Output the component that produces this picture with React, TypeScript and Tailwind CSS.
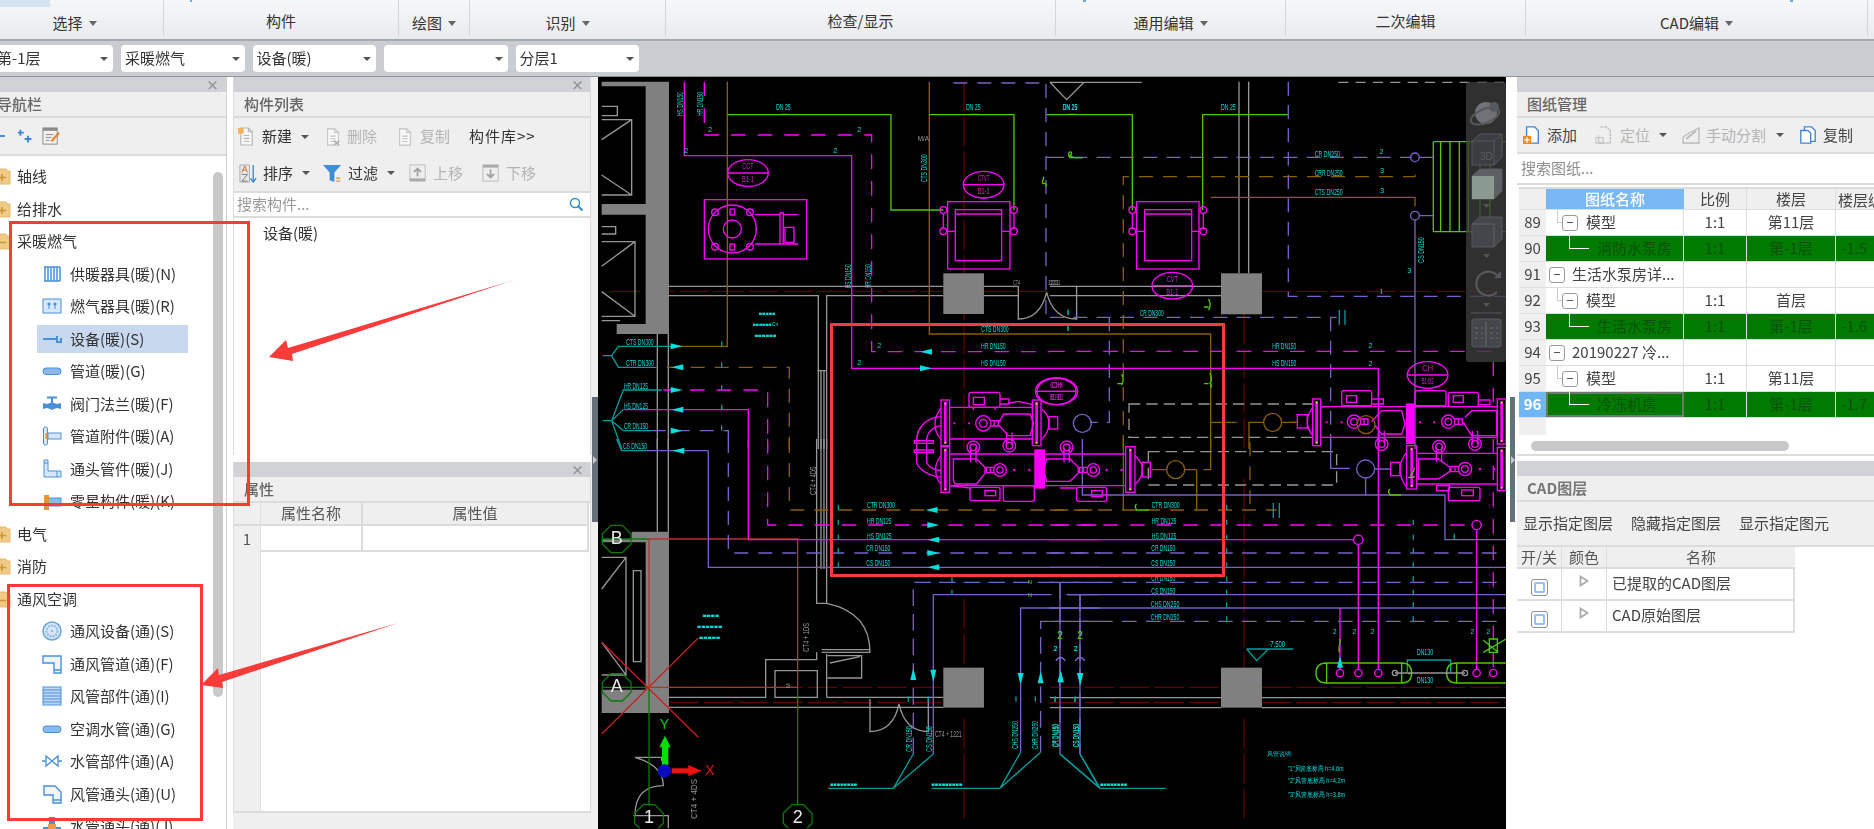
import type { ReactNode } from 'react';

const MG = '#ff00ff';
const GR = '#4ec800';
const PU = '#7a5fc8';
const BR = '#8a5e00';
const CY = '#00dede';
const TE = '#009c9c';
const GY = '#808080';
const LG = '#969696';
const DR = '#5c0000';
const DG = '#0a7a0a';
const BL = '#4a90d9';

// ---------- CAD drawing helpers ----------
const Q = ({ x, y, children }: { x: number; y: number; children: ReactNode }) => (
    <g transform={`translate(${x} ${y}) scale(0.3333)`} fill="none" strokeWidth={4}>{children}</g>
);
const P = ({ c, d, dash }: { c: string; d: string; dash?: string }) => <path d={d} stroke={c} strokeDasharray={dash} />;
const T = ({ x, y, t, r, c = CY, s = 25, w }: { x: number; y: number; t: string; r?: boolean; c?: string; s?: number; w?: number }) => (
    <text x={x} y={y} fill={c} stroke="none" fontSize={s} textAnchor="middle" dominantBaseline="middle"
        textLength={w} lengthAdjust={w ? 'spacingAndGlyphs' : undefined}
        transform={r ? `rotate(-90 ${x} ${y})` : undefined}>{t}</text>
);
const Arrow = ({ x, y, d }: { x: number; y: number; d: 'l' | 'r' | 'u' | 'd' }) => {
    const pts = {
        l: `${x - 18},${y} ${x + 18},${y - 9} ${x + 18},${y + 9}`,
        r: `${x + 18},${y} ${x - 18},${y - 9} ${x - 18},${y + 9}`,
        u: `${x},${y - 18} ${x - 9},${y + 18} ${x + 9},${y + 18}`,
        d: `${x},${y + 18} ${x - 9},${y - 18} ${x + 9},${y - 18}`,
    }[d];
    return <polygon points={pts} fill={CY} stroke="none" />;
};
const Ticks = ({ x, ys }: { x: number; ys: number }) => (
    <path d={`M${x} ${ys - 8}V${ys + 8}`} stroke={TE} />
);
const Bubble = ({ x, y, a, b }: { x: number; y: number; a: string; b: string }) => (
    <g stroke={MG}>
        <ellipse cx={x} cy={y} rx={61} ry={40} />
        <path d={`M${x - 60} ${y}H${x + 60}`} />
        <T x={x} y={y - 18} t={a} w={34} c="#d020d0" />
        <T x={x} y={y + 20} t={b} w={36} c="#d020d0" />
    </g>
);
const Circles = ({ c, r, pts }: { c: string; r: number; pts: number[][] }) => (
    <g stroke={c}>{pts.map(([x, y], i) => <circle key={i} cx={x} cy={y} r={r} />)}</g>
);
const Grid = ({ x, y, t }: { x: number; y: number; t: string }) => (
    <g>
        <polygon stroke={DG} points={`${x - 17},${y - 41} ${x + 17},${y - 41} ${x + 43},${y - 15} ${x + 43},${y + 15} ${x + 17},${y + 41} ${x - 17},${y + 41} ${x - 43},${y + 15} ${x - 43},${y - 15}`} />
        <T x={x} y={y} t={t} c="#e8e8e8" s={54} />
    </g>
);

// chiller parts, in the 3x crop units
const Plate = ({ x, a, b, w = 26 }: { x: number; a: number; b: number; w?: number }) => (
    <g>
        <rect x={x} y={a} width={w} height={b - a} />
        <rect x={x + w / 2 - 4} y={a + 6} width={8} height={b - a - 12} fill={MG} stroke="none" />
        <circle cx={x + w / 2} cy={a + 11} r={3} fill="#ffc848" stroke="none" />
        <circle cx={x + w / 2} cy={b - 9} r={3} fill="#ffc848" stroke="none" />
    </g>
);
const Key = ({ x, y, r = 22, flip }: { x: number; y: number; r?: number; flip?: boolean }) => {
    const s = flip ? -1 : 1;
    return (
        <g>
            <circle cx={x} cy={y} r={r} />
            <circle cx={x} cy={y} r={r / 2} />
            <path d={`M${x + s * r} ${y - 8}H${x + s * (r + 22)}V${y + 8}H${x + s * r}M${x + s * (r + 10)} ${y - 8}V${y + 8}`} />
        </g>
    );
};
const Drop = ({ x, y, up }: { x: number; y: number; up?: boolean }) => (
    <g>
        <circle cx={x} cy={y} r={19} />
        <circle cx={x} cy={y} r={10} />
        <path d={`M${x - 8} ${y}V${y + (up ? 45 : -40)}M${x + 8} ${y}V${y + (up ? 45 : -40)}`} />
    </g>
);
const Dots = ({ pts }: { pts: number[][] }) => (
    <g fill={MG} stroke="none">{pts.map(([x, y], i) => <circle key={i} cx={x} cy={y} r={3.5} />)}</g>
);

const ChillerA = () => (
    <Q x={905} y={385}>
        <g stroke={MG}>
            <Plate x={108} a={48} b={185} />
            <Plate x={382} a={48} b={185} />
            <Plate x={108} a={188} b={325} />
            <Plate x={662} a={188} b={325} w={28} />
            <rect x={390} y={198} width={28} height={114} fill={MG} />
            <path d="M135 70H382M135 165H382M135 210H662M135 305H662" />
            <path d="M108 72Q90 95 90 120Q90 148 108 165M410 75Q431 92 432 116Q431 148 410 165M108 215Q92 235 92 255Q92 285 108 300M690 215Q712 235 712 255Q712 285 690 300" />
            <path d="M108 98C60 100 35 135 35 170V232C35 252 70 276 108 280M108 125C78 130 65 150 65 170V232C65 245 85 258 108 260" />
            <path d="M28 170H85V178H28ZM28 198H85V206H28Z" />
            <rect x={432} y={98} width={26} height={37} />
            <rect x={712} y={235} width={24} height={44} />
            <rect x={192} y={25} width={93} height={45} rx={6} />
            <rect x={205} y={40} width={33} height={22} />
            <path d="M285 45H312V60H285M312 58L340 52L385 62M205 70V78M270 70V78" />
            <Key x={235} y={118} r={23} />
            <path d="M280 118L296 90H375L386 118L375 155H310L280 122" />
            <Drop x={313} y={185} />
            <path d="M145 225H215L240 250V268L215 300H150L145 290Z" />
            <path d="M425 225H495L520 250V268L495 292H425L416 258Z" />
            <path d="M240 258" />
            <Key x={285} y={258} r={19} flip />
            <Key x={565} y={258} r={19} flip />
            <Drop x={205} y={190} up />
            <Drop x={485} y={190} up />
            <rect x={195} y={310} width={90} height={40} rx={6} />
            <rect x={240} y={320} width={32} height={15} />
            <rect x={295} y={305} width={93} height={47} rx={6} />
            <rect x={515} y={310} width={90} height={42} rx={6} />
            <rect x={560} y={320} width={32} height={18} />
            <path d="M135 305L195 312M465 312H515" />
        </g>
        <Dots pts={[[148, 118], [192, 118], [328, 258], [373, 258], [605, 258], [650, 258]]} />
    </Q>
);

const ChillerB = () => (
    <Q x={1290} y={385}>
        <g stroke={MG}>
            <Plate x={68} a={45} b={185} w={24} />
            <rect x={350} y={60} width={22} height={118} fill={MG} />
            <Plate x={622} a={45} b={180} w={26} />
            <Plate x={350} a={185} b={315} w={30} />
            <Plate x={622} a={190} b={320} w={26} />
            <path d="M92 68H622M92 160H622M380 208H622M380 300H622" />
            <path d="M68 70Q52 90 52 112Q52 135 68 155M350 205Q330 230 330 255Q330 285 350 310" />
            <rect x={22} y={92} width={30} height={40} />
            <rect x={302} y={235} width={28} height={40} />
            <rect x={155} y={20} width={90} height={45} rx={6} />
            <rect x={170} y={35} width={30} height={20} />
            <path d="M245 45H280V60H245" />
            <rect x={375} y={20} width={93} height={45} rx={6} />
            <rect x={475} y={25} width={90} height={43} rx={6} />
            <rect x={490} y={35} width={30} height={20} />
            <path d="M565 48H600V62H565" />
            <Key x={192} y={113} r={20} />
            <Key x={475} y={113} r={20} />
            <path d="M245 113L275 80H335L345 120L335 150H275L255 125" />
            <path d="M525 100L545 80H620V155H545L520 115" />
            <Drop x={275} y={180} />
            <Drop x={555} y={180} />
            <Drop x={447} y={188} up />
            <path d="M385 225H445L480 250V262L445 285H385Z" />
            <Key x={525} y={255} r={20} flip />
            <rect x={475} y={310} width={95} height={40} rx={6} />
            <rect x={515} y={318} width={35} height={17} />
            <rect x={440} y={305} width={38} height={15} />
        </g>
        <Dots pts={[[110, 115], [155, 115], [390, 115], [433, 115], [570, 255], [612, 255]]} />
        <P c={BR} d="M0 115H22" />
        <Circles c={BR} r={27} pts={[[228, 122]]} />
        <P c={GR} d="M372 250c4 12-4 14-8 22s6 12 10 4M354 280h14" />
    </Q>
);

const CadDrawing = () => (
    <svg width={908} height={751} viewBox="598 78 908 751" className="block font-['Liberation_Sans',sans-serif]">
        {/* top left */}
        <Q x={600} y={70}>
            <P c={DR} d="M30 667H1030M1092 38V1140M1152 667H1350" dash="90 14" />
            <path fill={GY} d="M5 38H207V795H50V765H137V437H5V405H137V52H5Z" />
            <rect x={1030} y={613} width={122} height={122} fill={GY} />
            <P c={LG} d="M5 152H95V378H5M5 212L95 152M5 318L95 378M5 112H52V140H5M5 518H105V742H5M5 592L105 518M5 668L105 742M5 473H47V495H5M5 755H60" />
            <P c={LG} d="M172 795V1140M205 795V1140M207 652H1030M207 680H655V1140M680 1140V680H1030M663 905V1140M672 905V1140M652 905H680" />
            <P c={LG} d="M1152 652H1255V750Q1320 750 1340 670Q1360 750 1430 750V652H1350M1152 680H1255M1430 680H1350M1350 40L1400 92L1452 40" />
            <P c={BR} d="M382 38V832H215M988 38V795H1350" />
            <P c={BR} d="M200 895H568V1140" dash="42 30" />
            <P c={GR} d="M382 137H873V423H1030M988 137H1242V423M1340 137H1350" />
            <P c={MG} d="M253 38V260H755V898H1350M70 1022H445V1140" />
            <P c={MG} d="M313 38V198H815V848H1350M190 963H503V1140" dash="44 36" />
            <P c={PU} d="M1338 45V745H1350M1060 42H1340M1340 265H1350M155 1085H385V1140" dash="42 30" />
            <P c={TE} d="M8 860H35L55 832H215M35 860L55 895H170M8 1055H35L70 963H185M35 1055L70 1022M35 1055L70 1085H155M35 1055L65 1140" />
            <g stroke={MG}>
                <rect x={313} y={392} width={307} height={178} />
                <circle cx={397} cy={480} r={72} />
                <circle cx={397} cy={480} r={27} />
                <path d="M465 437H540M465 525H540M540 432H550V525H540ZM550 437H595M550 525H595M555 475H582V520H555Z" />
                <rect x={390} y={420} width={14} height={18} />
                <rect x={390} y={525} width={14} height={18} />
                <rect x={1043} y={398} width={187} height={202} />
                <rect x={1066} y={422} width={139} height={153} />
                <path d="M1066 435H1205M1030 432V478M1242 432V478M1040 487H1066M1205 487H1232" />
            </g>
            <Circles c={MG} r={10} pts={[[345, 430], [450, 430], [345, 533], [450, 533], [1030, 423], [1030, 487], [1242, 423], [1242, 487]]} />
            <Bubble x={444} y={312} a="CCT" b="B1-1" />
            <Bubble x={1151} y={347} a="CTVT" b="B1-1" />
            <Bubble x={1372} y={967} a="CH" b="B1-B1" />
            <T x={243} y={105} t="HS DN150" r w={72} />
            <T x={303} y={105} t="HR DN150" r w={72} />
            <T x={745} y={622} t="HS DN150" r w={72} />
            <T x={805} y={622} t="HR DN150" r w={72} />
            <T x={975} y={298} t="CTS DN300" r w={84} />
            <T x={550} y={115} t="DN 25" w={44} />
            <T x={1120} y={115} t="DN 25" w={44} />
            <T x={1410} y={115} t="DN 25" w={44} />
            <T x={502} y={735} t="■■■■■" s={14} w={50} />
            <T x={497} y={767} t="■■■■■■Cn" s={14} w={76} />
            <T x={497} y={800} t="■■■■■■" s={14} w={66} />
            <T x={120} y={822} t="CTS DN300" w={82} />
            <T x={120} y={884} t="CTR DN300" w={84} />
            <T x={108} y={952} t="HR DN125" w={72} />
            <T x={108} y={1012} t="HS DN125" w={72} />
            <T x={108} y={1072} t="CR DN150" w={72} />
            <T x={1185} y={783} t="CTS DN300" w={82} />
            <T x={1180} y={833} t="HR DN150" w={74} />
            <T x={1180} y={885} t="HS DN150" w={74} />
            <T x={838} y={831} t="2" s={22} />
            <T x={778} y={882} t="2" s={22} />
            <T x={330} y={184} t="2" s={22} />
            <T x={778} y={184} t="2" s={22} />
            <T x={258} y={246} t="2" s={22} />
            <T x={706} y={246} t="2" s={22} />
            <T x={970} y={212} t="M/A" c={LG} s={20} w={34} />
            <T x={1360} y={642} t="1221" c={LG} s={22} w={32} />
            <T x={1250} y={642} t="CT4" c={LG} s={22} w={22} />
            <Ticks x={365} ys={825} />
            <Ticks x={365} ys={888} />
            <Ticks x={365} ys={957} />
            <Ticks x={365} ys={1015} />
            <Ticks x={365} ys={1077} />
            <Ticks x={1404} ys={730} />
            <Ticks x={1404} ys={778} />
            <Arrow x={230} y={832} d="r" />
            <Arrow x={232} y={895} d="l" />
            <Arrow x={230} y={963} d="r" />
            <Arrow x={232} y={1022} d="l" />
            <Arrow x={230} y={1085} d="r" />
            <Arrow x={978} y={848} d="l" />
            <Arrow x={978} y={898} d="r" />
            <P c={GR} d="M545 136h22M1110 136h24M1404 136h24M1405 262c8-6 12 4 18 4h22M1330 345c-8-8 4-14 0-22M1330 345c6-4 10 0 8 8" />
        </Q>

        {/* top right */}
        <Q x={1050} y={70}>
            <P c={DR} d="M636 667H1370M582 735V1140" dash="90 14" />
            <P c={LG} d="M0 40H275M80 652H513M80 680H513M567 38V613M596 38V613" />
            <P c={LG} d="M865 40H1370" dash="30 22" />
            <rect x={513} y={613} width={123} height={123} fill={GY} />
            <P c={GR} d="M0 137H247V423M458 423V137H715M1150 218H1370M1150 488H1370M1150 218V488M1172 218V488M1200 218V488M1228 218V488M1255 218V488M1290 218V488M1320 218V488" />
            <P c={BR} d="M0 795H482V1140M482 385H1095V412M482 1060H560M640 1060H597V1140M697 1060H745" />
            <P c={BR} d="M220 1140V323H1095V310" dash="42 30" />
            <P c={PU} d="M0 265H1085" dash="42 28" />
            <P c={PU} d="M1108 265H1150M1108 440H1150M1095 453V1140" />
            <P c={PU} d="M715 38V682H1370M0 745H860M178 745V1060H120M842 745V1140" dash="42 28" />
            <P c={MG} d="M0 898H985V1140" />
            <P c={MG} d="M0 847H1330V1000" dash="44 36" />
            <P c={TE} d="M868 723V768M885 723V768" />
            <P c={LG} d="M237 1005H800V1105H237Z" dash="34 18" />
            <g stroke={MG}>
                <rect x={260} y={398} width={187} height={202} />
                <rect x={284} y={422} width={141} height={153} />
                <path d="M284 435H425M247 432V478M460 432V478M257 487H284M425 487H450" />
            </g>
            <Circles c={MG} r={10} pts={[[247, 423], [247, 487], [460, 423], [460, 487]]} />
            <Bubble x={367} y={650} a="CVT" b="B1-1" />
            <Bubble x={1133} y={918} a="CH" b="B1-B2" />
            <Bubble x={17} y={967} a="CH" b="B1-B1" />
            <Circles c={PU} r={13} pts={[[1095, 265], [1095, 440]]} />
            <Circles c={PU} r={27} pts={[[97, 1063]]} />
            <Circles c={BR} r={27} pts={[[668, 1060]]} />
            <T x={60} y={115} t="DN 25" w={44} />
            <T x={535} y={115} t="DN 25" w={44} />
            <T x={832} y={256} t="CR DN250" w={76} />
            <T x={836} y={313} t="CRR DN250" w={84} />
            <T x={836} y={372} t="CTS DN250" w={84} />
            <T x={305} y={735} t="CR DN300" w={72} />
            <T x={703} y={833} t="HR DN150" w={72} />
            <T x={703} y={885} t="HS DN150" w={72} />
            <T x={1115} y={543} t="CS DN150" r w={76} />
            <T x={995} y={249} t="2" s={22} />
            <T x={996} y={306} t="3" s={22} />
            <T x={996} y={366} t="3" s={22} />
            <T x={1078} y={605} t="3" s={22} />
            <T x={962} y={830} t="2" s={22} />
            <T x={962} y={885} t="2" s={22} />
            <T x={15} y={642} t="1221" c={LG} s={22} w={32} />
            <Ticks x={55} ys={730} />
            <Ticks x={55} ys={778} />
            <Ticks x={994} ys={667} />
            <P c={GR} d="M60 248c-10 8 0 16 0 18h38M60 248c8 2 4 10 0 10M476 690c4 14 8 14 0 34M480 940c4 14 8 14 0 14M215 915c4 14 8 14 0 34M480 912c4 14 8 14 0 34M462 714h14M202 944h14M462 944h14" />
        </Q>

        {/* bottom left */}
        <Q x={600} y={440}>
            <P c={DR} d="M207 745H1030M207 790H1030M1092 480V686M1092 840V1140" dash="90 14" />
            <path fill={GY} d="M95 278H207V822H5V752H137V310H5V300H95Z" />
            <rect x={1030} y={686} width={122} height={120} fill={GY} />
            <P c={LG} d="M172 0V278M205 0V278M5 355H78V708H5M5 450L78 355M5 610L78 708M100 395H123V668H100ZM650 0V493H680V0M663 0V390M672 0V390" />
            <P c={LG} d="M680 493Q810 520 810 640M665 632H812M665 640H812M650 640V662H497V775H207M525 695H652V775H525ZM680 645V775M683 650H785V717H683M690 672L780 653M680 775H1030M207 805H1030M810 780V878Q880 878 897 795Q915 878 985 878V775" />
            <P c={LG} d="M105 955H185V965M105 955Q190 980 190 1040Q105 1040 105 1130M100 1130H205V1167" />
            <P c={DG} d="M10 300H147M10 745H147V1100M593 745V1095" />
            <P c="#b03434" d="M147 300H593V745H147Z" />
            <P c="#c82020" d="M5 610L295 895M295 597L5 885" />
            <Grid x={50} y={300} t="B" />
            <Grid x={50} y={745} t="A" />
            <Grid x={147} y={1138} t="1" />
            <Grid x={593} y={1138} t="2" />
            <P c={MG} d="M445 0V302H1500" />
            <P c={MG} d="M503 0V258H1500" dash="44 36" />
            <P c={BR} d="M568 0V213H1500" dash="42 30" />
            <P c={PU} d="M385 0V342H1500" dash="42 30" />
            <P c={PU} d="M325 35V385H1500M140 35H325M1000 945V467H1355M1400 467H1500M1262 940V507H1500" />
            <P c={PU} d="M940 945V430H1500M1322 940V547H1500M1380 430V940M1440 467V945" dash="50 24" />
            <P c={TE} d="M50 0L65 35H140M940 945L880 1048M1000 945L880 1048M880 1048H685M1262 940L1200 1048M1322 940L1200 1048M1200 1048H995M1380 945L1500 1048M1440 945L1500 1048" />
            <T x={105} y={22} t="CS DN150" w={72} />
            <T x={843} y={200} t="CTR DN300" w={84} />
            <T x={838} y={248} t="HR DN125" w={74} />
            <T x={838} y={292} t="HS DN125" w={74} />
            <T x={835} y={330} t="CR DN150" w={72} />
            <T x={835} y={375} t="CS DN150" w={72} />
            <T x={333} y={530} t="■■■■" s={14} w={50} />
            <T x={330} y={563} t="■■■■■■" s={14} w={76} />
            <T x={330} y={597} t="■■■■■" s={14} w={64} />
            <T x={640} y={125} t="CT4 + 4DS" c={LG} r w={86} />
            <T x={620} y={595} t="CT4 + 1DS" c={LG} r w={86} />
            <T x={565} y={740} t="M" c={LG} s={18} r />
            <T x={285} y={1080} t="CT4 + 4DS" c={LG} r w={120} />
            <T x={1045} y={886} t="CT4 + 1221" c={LG} w={80} />
            <T x={928} y={900} t="CR DN150" r w={76} />
            <T x={988} y={900} t="CS DN150" r w={76} />
            <T x={1248} y={888} t="CHS DN250" r w={84} />
            <T x={1308} y={888} t="CHR DN250" r w={84} />
            <T x={1370} y={890} t="CR DN150" r w={70} />
            <T x={1430} y={890} t="CS DN150" r w={70} />
            <T x={730} y={1038} t="■■■■■■■■" s={15} w={82} />
            <T x={1040} y={1038} t="■■■■■■■■■" s={15} w={94} />
            <T x={1380} y={593} t="2" c={GR} s={30} />
            <T x={1440} y={593} t="2" c={GR} s={30} />
            <T x={1290} y={430} t="N" c={GR} s={18} />
            <T x={1290} y={468} t="N" c={GR} s={18} />
            <T x={1366} y={632} t="2" s={20} />
            <T x={1428} y={632} t="2" s={20} />
            <P c={PU} d="M1368 665Q1382 645 1396 665M1426 665Q1440 645 1454 665" />
            <Ticks x={715} ys={205} />
            <Ticks x={715} ys={250} />
            <Ticks x={715} ys={295} />
            <Ticks x={715} ys={335} />
            <Ticks x={715} ys={378} />
            <Ticks x={1056} ys={422} />
            <Ticks x={1056} ys={460} />
            <Ticks x={925} ys={780} />
            <Ticks x={985} ys={780} />
            <Ticks x={1248} ys={780} />
            <Ticks x={1306} ys={780} />
            <Ticks x={1366} ys={780} />
            <Ticks x={1426} ys={780} />
            <Arrow x={235} y={35} d="l" />
            <Arrow x={995} y={213} d="l" />
            <Arrow x={1000} y={258} d="r" />
            <Arrow x={1000} y={302} d="l" />
            <Arrow x={1000} y={342} d="r" />
            <Arrow x={1000} y={385} d="l" />
            <Arrow x={940} y={705} d="u" />
            <Arrow x={1000} y={710} d="d" />
            <Arrow x={1262} y={720} d="d" />
            <Arrow x={1322} y={715} d="u" />
            <Arrow x={1382} y={712} d="u" />
            <Arrow x={1440} y={720} d="d" />
            {/* axis */}
            <polygon fill="#00e000" stroke="none" points="195,890 178,925 186,925 186,978 205,978 205,925 212,925" />
            <polygon fill="#f01010" stroke="none" points="215,988 265,988 265,978 305,995 265,1012 265,1003 215,1003" />
            <circle cx={193} cy={996} r={20} fill="#0a0ac0" stroke="none" />
            <T x={193} y={858} t="Y" c="#00d000" s={44} />
            <T x={330} y={996} t="X" c="#e01010" s={44} />
        </Q>

        {/* bottom right */}
        <Q x={1050} y={440}>
            <P c={DR} d="M0 745H513M636 745H1370M0 790H513M636 790H1370M582 120V686M582 840V1140" dash="90 14" />
            <rect x={513} y={686} width={123} height={120} fill={GY} />
            <P c={LG} d="M0 776H513M636 776H1370M0 806H513M636 806H1370" />
            <P c={BR} d="M0 213H680M600 10V213" dash="42 30" />
            <P c={BR} d="M220 0V213M440 92V213M305 92H350M404 92H440M482 0V92H460" />
            <P c={LG} d="M295 38H860V138H295Z" dash="34 18" />
            <P c={MG} d="M0 302H911M939 302H940M925 316V690M985 0V690M870 507V690M1280 272V690" />
            <P c={MG} d="M0 258H1266M1330 0V690" dash="44 36" />
            <P c={PU} d="M0 342H1370M0 430H1370M0 547H1370" dash="44 28" />
            <P c={PU} d="M97 0V168H1185V302H1370M0 385H1370M50 467H1370M0 507H1370M842 0V88H900M947 117V168M975 90H1025M30 430V945M90 467V945" />
            <P c={TE} d="M30 945L150 1048M90 945L150 1048M150 1048H348M590 630H730M590 630L620 665L655 630M670 192V237M688 192V237M1072 700V663H1202V700" />
            <P c={GR} d="M830 672H1055Q1085 672 1085 702Q1085 732 1055 732H830Q798 732 798 702Q798 672 830 672ZM830 672V732M1055 672V732M1368 672H1220Q1190 672 1190 702Q1190 732 1220 732H1368M1220 672V732M1318 600H1342V640H1318ZM1300 604L1345 640M1300 640L1368 600" />
            <P c={GR} d="M260 195c-10 6 0 16 0 18h36M1020 150c-10 6 0 16 0 18h34M1075 705q8-4 12 0M870 600c4 10 -6 18 -2 40" />
            <P c={LG} d="M1035 702H1245" />
            <Circles c={LG} r={8} pts={[[1035, 702], [1245, 702]]} />
            <Circles c={MG} r={11} pts={[[870, 702], [925, 702], [985, 702], [1280, 702], [1330, 702]]} />
            <Circles c={MG} r={14} pts={[[925, 302], [1280, 258]]} />
            <Circles c={PU} r={27} pts={[[947, 90]]} />
            <Circles c={BR} r={27} pts={[[377, 92]]} />
            <T x={347} y={200} t="CTR DN300" w={84} />
            <T x={342} y={248} t="HR DN125" w={74} />
            <T x={342} y={292} t="HS DN125" w={74} />
            <T x={340} y={330} t="CR DN150" w={72} />
            <T x={340} y={375} t="CS DN150" w={72} />
            <T x={340} y={420} t="CR DN150" w={72} />
            <T x={340} y={458} t="CS DN150" w={72} />
            <T x={345} y={497} t="CHS DN250" w={86} />
            <T x={345} y={537} t="CHR DN250" w={86} />
            <T x={18} y={890} t="CR DN150" r w={70} />
            <T x={80} y={890} t="CS DN150" r w={70} />
            <T x={190} y={1038} t="■■■■■■■■" s={15} w={82} />
            <T x={680} y={618} t="-7.500" w={50} />
            <T x={1125} y={642} t="DN130" w={50} />
            <T x={1125} y={725} t="DN130" w={50} />
            <T x={690} y={947} t="风管说明:" s={18} w={76} />
            <T x={797} y={990} t='"1"风管底标高 h=4.6m' s={20} w={168} />
            <T x={800} y={1028} t='"2"风管底标高 h=4.2m' s={20} w={172} />
            <T x={800} y={1070} t='"3"风管底标高 h=3.8m' s={20} w={172} />
            <T x={30} y={592} t="2" c={GR} s={30} />
            <T x={90} y={592} t="2" c={GR} s={30} />
            <T x={17} y={632} t="2" s={20} />
            <T x={77} y={632} t="2" s={20} />
            <T x={855} y={580} t="2" s={20} />
            <T x={913} y={580} t="2" s={20} />
            <T x={968} y={580} t="2" s={20} />
            <T x={1267} y={580} t="2" s={20} />
            <T x={1315} y={580} t="2" s={20} />
            <P c={PU} d="M18 665Q31 645 45 665M76 665Q90 645 104 665" />
            {[205, 250, 295, 335, 378, 420, 460, 498, 540].map((y) => <Ticks key={y} x={530} ys={y} />)}
            {[250, 295, 335, 378, 420, 460, 498, 540].map((y) => <Ticks key={y} x={1090} ys={y} />)}
            <Ticks x={1213} ys={292} />
            <Ticks x={15} ys={782} />
            <Ticks x={75} ys={782} />
            <Arrow x={32} y={712} d="u" />
            <Arrow x={91} y={720} d="d" />
            <Arrow x={870} y={668} d="u" />
        </Q>
        <ChillerA />
        <ChillerB />
    </svg>
);

// ---------- UI icons ----------
const Ic = ({ s = 20, children, className }: { s?: number; children: ReactNode; className?: string }) => (
    <svg width={s} height={s} viewBox="0 0 20 20" fill="none" className={`shrink-0 ${className ?? ''}`}>{children}</svg>
);
const Caret = () => <span className="ml-[6px] block h-0 w-0 border-x-[4px] border-t-[5px] border-x-transparent border-t-[#666]" />;
const TinyCaret = ({ className }: { className: string }) => (
    <span className={`h-0 w-0 shrink-0 border-x-[4px] border-t-[4px] border-x-transparent border-t-[#555] ${className}`} />
);

const Folder = ({ open }: { open?: boolean }) => (
    <svg width={18} height={18} viewBox="0 0 18 18" className="-ml-[7px] shrink-0">
        <path d="M1 4h5l1-2h6l1 2h3v13H1z" fill="#efcb86" stroke="#e3b96c" />
        <path d={open ? 'M5 10.5h8' : 'M5 10.5h8M9 7v7'} stroke="#c9963c" strokeWidth={1.6} />
    </svg>
);

const treeIcons: Record<string, ReactNode> = {
    heater: <path d="M2 3h16M2 17h16M3 3v14M6 3v14M9 3v14M12 3v14M15 3v14M18 3v14" stroke={BL} strokeWidth={1.5} />,
    gas: <g><rect x="1" y="3" width="18" height="14" fill="#d7e6f8" stroke={BL} /><circle cx="7" cy="8" r="1.6" fill={BL} /><circle cx="13" cy="8" r="1.6" fill={BL} /><path d="M7 9v4M13 9v4" stroke={BL} /></g>,
    equip: <path d="M1 10h13M15 7v6h4V9" stroke={BL} strokeWidth={2} />,
    pipe: <rect x="1" y="7" width="18" height="6.5" rx="3" fill="#8db9ea" stroke={BL} />,
    valve: <g fill={BL}><path d="M1 9l4 1 3-1 2-1 2 1 3 1 4-1v6l-4-1-3 1-2 1-2-1-3-1-4 1z" /><path d="M9 3h2v6H9zM5 2.500h10v2H5z" /></g>,
    fitting: <g><rect x="1.500" y="1" width="4" height="18" rx="2" fill="#d7e6f8" stroke={BL} /><rect x="6" y="7" width="13" height="6" fill="#d7e6f8" stroke={BL} /><path d="M4.500 7v6" stroke="#e8923c" strokeWidth={2} /></g>,
    elbow: <path d="M2 1h4v11h13v6H2zM2 4h4M15 12v6" fill="#d7e6f8" stroke={BL} />,
    misc: <g><rect x="6" y="7" width="13" height="8" fill="#8db9ea" stroke={BL} /><rect x="2" y="4" width="5" height="15" fill="#e8923c" /></g>,
    fan: <g><circle cx="10" cy="10" r="9" fill="#d7e6f8" stroke="#6fa3dc" strokeWidth={1.5} /><circle cx="10" cy="10" r="5.500" stroke="#8db9ea" strokeDasharray="2 1" strokeWidth={2} /><circle cx="10" cy="10" r="1" fill="#6fa3dc" /></g>,
    duct: <path d="M1 2h18v17h-7V9H1zM12 16h7" fill="#eef5fd" stroke={BL} strokeWidth={1.4} />,
    grille: <g><rect x="1" y="1" width="18" height="18" fill="#bcd6f4" stroke={BL} /><path d="M1 4h18M1 7h18M1 10h18M1 13h18M1 16h18" stroke={BL} /></g>,
    waterValve: <path d="M0 10h4M16 10h4M4 5l12 10V5L4 15z" stroke={BL} strokeWidth={1.3} />,
    ductElbow: <path d="M2 2h11l6 6v11h-8V11H2zM11 16h8" fill="#eef5fd" stroke={BL} strokeWidth={1.4} />,
    waterElbow: <g><path d="M7 1h6v18H7z" fill={BL} /><path d="M1 11h18v6H1z" fill={BL} /><rect x="6" y="8" width="8" height="8" fill="#ef9a4a" /></g>,
};

type TreeRow = { t: string; folder?: boolean; open?: boolean; icon?: string; sel?: boolean };
const tree: TreeRow[] = [
    { t: '轴线', folder: true },
    { t: '给排水', folder: true },
    { t: '采暖燃气', folder: true, open: true },
    { t: '供暖器具(暖)(N)', icon: 'heater' },
    { t: '燃气器具(暖)(R)', icon: 'gas' },
    { t: '设备(暖)(S)', icon: 'equip', sel: true },
    { t: '管道(暖)(G)', icon: 'pipe' },
    { t: '阀门法兰(暖)(F)', icon: 'valve' },
    { t: '管道附件(暖)(A)', icon: 'fitting' },
    { t: '通头管件(暖)(J)', icon: 'elbow' },
    { t: '零星构件(暖)(K)', icon: 'misc' },
    { t: '电气', folder: true },
    { t: '消防', folder: true },
    { t: '通风空调', folder: true, open: true },
    { t: '通风设备(通)(S)', icon: 'fan' },
    { t: '通风管道(通)(F)', icon: 'duct' },
    { t: '风管部件(通)(I)', icon: 'grille' },
    { t: '空调水管(通)(G)', icon: 'pipe' },
    { t: '水管部件(通)(A)', icon: 'waterValve' },
    { t: '风管通头(通)(U)', icon: 'ductElbow' },
    { t: '水管通头(通)(J)', icon: 'waterElbow' },
];

const CloseX = () => <span className="text-[13px] font-bold leading-none text-[#8e9094]">×</span>;
const PanelHead = ({ close = true, className = '' }: { close?: boolean; className?: string }) => (
    <div className={`flex h-[15px] shrink-0 items-center justify-end bg-[#d0d2d6] pr-[6px] ${className}`}>{close && <CloseX />}</div>
);
const PanelTitle = ({ children }: { children: ReactNode }) => (
    <div className="flex h-[26px] shrink-0 items-center border-b-2 border-[#dcdcdc] bg-[#efefef] pl-[10px] text-[15px] font-medium text-[#666]">{children}</div>
);

const Doc = ({ c = '#b5b5b5' }: { c?: string }) => (
    <g stroke={c} fill="#f7f7f7" strokeWidth={1.2}><path d="M4 1h8l4 4v14H4z" /><path d="M12 1v4h4M7 9h6M7 12h6M7 15h6" fill="none" /></g>
);

const LeftPanel = () => (
    <div className="relative flex h-full w-[227px] shrink-0 flex-col overflow-hidden border-r border-[#cfcfcf]">
        <PanelHead className="pr-[7px]" />
        <div className="flex h-[26px] shrink-0 items-center border-b-2 border-[#dcdcdc] bg-[#efefef] text-[15px] font-medium text-[#666]">
            <span className="-ml-[3px]">导航栏</span>
        </div>
        <div className="flex h-[38px] shrink-0 items-center border-b-2 border-[#dcdcdc] bg-[#efefef]">
            <span className="h-[2px] w-[5px] bg-[#4a8fd8]" />
            <Ic s={17} className="ml-[12px]"><path d="M4 2v7M1 5.500h7M13 9v8M9 13h8" stroke="#3f86d6" strokeWidth={2.2} /></Ic>
            <Ic s={19} className="ml-[8px]"><rect x="1" y="1" width="15" height="17" fill="#f2f2f2" stroke="#8a8a8a" /><path d="M1 1h15v3H1z" fill="#8a8a8a" /><path d="M4 8h8M4 11h6M4 14h4" stroke="#888" /><path d="M10 15l8-9" stroke="#e8842c" strokeWidth={2.4} /></Ic>
        </div>
        <div className="pt-[4px] text-[15px] text-[#333]">
            {tree.map((r) => r.folder ? (
                <div key={r.t} className="flex h-[32.5px] items-center gap-[6px]"><Folder open={r.open} /><span>{r.t}</span></div>
            ) : (
                <div key={r.t} className="flex h-[32.5px] items-center">
                    <div className={`ml-[37px] flex h-[28px] w-[151px] items-center gap-[8px] pl-[5px] ${r.sel ? 'bg-[#c7d8ef]' : ''}`}>
                        <Ic>{treeIcons[r.icon as string]}</Ic>
                        <span className="whitespace-nowrap">{r.t}</span>
                    </div>
                </div>
            ))}
        </div>
        {/* scrollbar */}
        <div className="absolute left-[213px] top-[95px] h-[525px] w-[10px] rounded-full bg-[#c9c9c9]" />
    </div>
);

const MiddlePanel = () => (
    <div className="ml-[6px] flex h-full w-[358px] shrink-0 flex-col bg-[#efefef]">
        <div className="flex h-[378px] shrink-0 flex-col border-x border-[#dcdcdc]">
            <PanelHead />
            <PanelTitle>构件列表</PanelTitle>
            <div className="flex h-[37px] shrink-0 items-center text-[15px] text-[#333]">
                <Ic s={19} className="ml-[3px]"><Doc /><rect x="1" y="1" width="6" height="6" fill="#f3b35a" /></Ic>
                <span className="ml-[6px]">新建</span>
                <TinyCaret className="ml-[9px]" />
                <Ic s={18} className="ml-[15px]"><Doc c="#c4c4c4" /><path d="M11 14l6 5M17 14l-6 5" stroke="#aaa" strokeWidth={1.5} /></Ic>
                <span className="ml-[5px] text-[#b4b4b4]">删除</span>
                <Ic s={18} className="ml-[19px]"><Doc c="#c4c4c4" /></Ic>
                <span className="ml-[6px] text-[#b4b4b4]">复制</span>
                <span className="ml-[19px] whitespace-nowrap tracking-[1px]">构件库&gt;&gt;</span>
            </div>
            <div className="flex h-[38px] shrink-0 items-center border-b-2 border-[#dcdcdc] text-[15px] text-[#333]">
                <Ic s={19} className="ml-[5px]"><path d="M1 1h10v18H1z" fill="#e8e8e8" stroke="#aaa" /><path d="M3 9l3-7 3 7M4 6.500h4" stroke="#d96a2a" /><path d="M3 11h6l-6 7h6" stroke="#777" /><path d="M15 1v17M12 15l3 4 3-4" stroke="#3f86d6" strokeWidth={1.4} /></Ic>
                <span className="ml-[5px]">排序</span>
                <TinyCaret className="ml-[9px]" />
                <Ic s={19} className="ml-[13px]"><path d="M0 1h19l-7 8v10l-5-2V9z" fill="#3f8fd6" /><path d="M14 15h4M14 18h4" stroke="#e8923c" strokeWidth={1.4} /></Ic>
                <span className="ml-[6px]">过滤</span>
                <TinyCaret className="ml-[9px]" />
                <Ic s={18} className="ml-[14px]"><rect x="1" y="1" width="17" height="18" fill="#eee" stroke="#b8b8b8" /><path d="M1 16h17v3H1z" fill="#aaa" /><path d="M9.500 14V5M5.500 9l4-4 4 4" stroke="#a2a2a2" strokeWidth={2} /></Ic>
                <span className="ml-[6px] text-[#b4b4b4]">上移</span>
                <Ic s={18} className="ml-[19px]"><rect x="1" y="1" width="17" height="18" fill="#eee" stroke="#b8b8b8" /><path d="M1 1h17v3H1z" fill="#aaa" /><path d="M9.500 6v9M5.500 11l4 4 4-4" stroke="#a2a2a2" strokeWidth={2} /></Ic>
                <span className="ml-[6px] text-[#b4b4b4]">下移</span>
            </div>
            <div className="flex h-[23px] shrink-0 items-center justify-between bg-white pl-[3px] pr-[6px] text-[15px] text-[#9a9a9a]">
                <span>搜索构件...</span>
                <Ic s={15}><circle cx="8" cy="8" r="6" stroke="#2e8fc0" strokeWidth={2} /><path d="M12 12l6 6" stroke="#2e8fc0" strokeWidth={2.6} /></Ic>
            </div>
            <div className="flex-1 border-t-2 border-[#dcdcdc] bg-white pl-[29px] pt-[4px] text-[15px] text-[#333]">设备(暖)</div>
        </div>
        <div className="h-[7px] shrink-0 bg-white" />
        <div className="flex h-[351px] shrink-0 flex-col border-x border-b-2 border-[#dcdcdc]">
            <PanelHead />
            <PanelTitle>属性</PanelTitle>
            <div className="flex flex-1 bg-white text-[15px] text-[#555]">
                <div className="w-[27px] shrink-0 border-r border-[#e0e0e0] bg-[#efefef]">
                    <div className="h-[23px] border-b-2 border-[#dcdcdc]" />
                    <div className="flex h-[26px] items-center justify-center">1</div>
                </div>
                <div className="w-[102px] shrink-0">
                    <div className="flex h-[23px] items-center justify-center border-b-2 border-r-2 border-[#dcdcdc] bg-[#efefef]">属性名称</div>
                    <div className="h-[26px] border-b-2 border-r-2 border-[#dcdcdc]" />
                </div>
                <div className="w-[226px] shrink-0">
                    <div className="flex h-[23px] items-center justify-center border-b-2 border-r-2 border-[#dcdcdc] bg-[#efefef]">属性值</div>
                    <div className="h-[26px] border-b-2 border-r-2 border-[#dcdcdc]" />
                </div>
            </div>
        </div>
    </div>
);

const Handle = () => (
    <div className="flex h-[125px] w-full items-center justify-center bg-[#66707a]">
        <span className="h-0 w-0 border-y-[4px] border-l-[4px] border-y-transparent border-l-[#c4c8cc]" />
    </div>
);

const SideTools = () => (
    <div className="absolute right-0 top-[5px] h-[280px] w-[40px] rounded-[3px] bg-[#3c3c3c]/80">
        <svg width={40} height={280} viewBox="0 0 40 280" fill="none" className="block">
            <circle cx="20" cy="31" r="11" fill="#6f7276" />
            <ellipse cx="19" cy="34" rx="15" ry="7" stroke="#55585c" strokeWidth={2} transform="rotate(-22 19 34)" />
            <circle cx="28" cy="25" r="5" fill="#55595e" />
            <path d="M6 59l8-7h22v23l-8 8H6zM6 59h22v24M28 59l8-7" stroke="#55585c" fill="#3b3d40" />
            <text x="14" y="78" fontSize="10" fill="#5e6063" fontFamily="Liberation Sans">3D</text>
            <path d="M6 94l8-7h22v22l-8 8H6z" fill="#5c6064" stroke="#55585c" />
            <path d="M6 94h22v23H6z" fill="#8a9a90" />
            <path d="M17 122h7l-3.500 4z" fill="#555" />
            <path d="M6 142l8-7h22v22l-8 8H6z" fill="#43464b" stroke="#55585c" />
            <path d="M6 142h22v23" stroke="#5e6165" />
            <path d="M17 172h7l-3.500 4z" fill="#555" />
            <path d="M33 196a12 12 0 1 0-2 14" stroke="#55585c" strokeWidth={2.2} />
            <path d="M28 196h7v-7z" fill="#55585c" />
            <path d="M17 221h7l-3.500 4z" fill="#555" />
            <path d="M5 231h31" stroke="#55585c" />
            <rect x="6" y="237" width="29" height="28" rx="2" fill="#43464b" stroke="#55585c" />
            <path d="M20 240v24M9 246h3M9 251h3M9 256h3M15 246h2M15 251h2M15 256h2M24 246h3M24 251h3M24 256h3M30 246h2M30 251h2M30 256h2" stroke="#6b6e72" />
        </svg>
    </div>
);

type DRow = { n: number; name: string; lvl: 0 | 1 | 2; ratio?: string; floor?: string; h?: string; cur?: boolean };
const drawings: DRow[] = [
    { n: 89, name: '模型', lvl: 1, ratio: '1:1', floor: '第11层' },
    { n: 90, name: '消防水泵房', lvl: 2, ratio: '1:1', floor: '第-1层', h: '-1.5' },
    { n: 91, name: '生活水泵房详...', lvl: 0 },
    { n: 92, name: '模型', lvl: 1, ratio: '1:1', floor: '首层' },
    { n: 93, name: '生活水泵房', lvl: 2, ratio: '1:1', floor: '第-1层', h: '-1.6' },
    { n: 94, name: '20190227 冷...', lvl: 0 },
    { n: 95, name: '模型', lvl: 1, ratio: '1:1', floor: '第11层' },
    { n: 96, name: '冷冻机房', lvl: 2, ratio: '1:1', floor: '第-1层', h: '-1.7', cur: true },
];

const Minus = () => (
    <span className="flex h-[16px] w-[16px] shrink-0 items-center justify-center rounded-[3px] border border-[#999] bg-white">
        <span className="h-px w-[6px] bg-[#555]" />
    </span>
);

const DrawingRow = ({ r }: { r: DRow }) => {
    const green = r.lvl === 2;
    const cell = `flex items-center justify-center border-r border-[#dedede] ${green ? 'bg-[#007a00] text-[#0b520b]' : ''}`;
    return (
        <div className="flex h-[26px] border-b border-[#dedede] text-[15px] text-[#444]">
            <div className={`flex w-[27px] shrink-0 items-center justify-center ${r.cur ? 'bg-[#70b5f5] font-bold text-white' : 'bg-[#efefef]'}`}>{r.n}</div>
            <div className={`relative flex w-[138px] shrink-0 items-center border-r border-[#dedede] ${green ? 'bg-[#007a00] text-[#0b520b]' : ''} ${r.cur ? 'outline-2 -outline-offset-2 outline-[#6c7a6c]' : ''}`}>
                {r.lvl === 0 && <span className="ml-[3px] flex items-center gap-[7px] whitespace-nowrap"><Minus />{r.name}</span>}
                {r.lvl === 1 && (
                    <span className="ml-[16px] flex items-center gap-[8px]">
                        <Minus />{r.name}
                        <span className="absolute left-[11px] top-0 h-[13px] w-[5px] border-b border-l border-[#ccc]" />
                    </span>
                )}
                {r.lvl === 2 && (
                    <span className="ml-[51px]">
                        <span className="absolute left-[23px] top-0 h-[13px] w-[20px] border-b border-l border-white" />
                        {r.name}
                    </span>
                )}
            </div>
            <div className={`w-[63px] shrink-0 ${cell}`}>{r.ratio}</div>
            <div className={`w-[89px] shrink-0 ${cell}`}>{r.floor}</div>
            <div className={`flex w-[40px] shrink-0 items-center pl-[5px] ${green ? 'bg-[#007a00] text-[#0b520b]' : ''}`}>{r.h}</div>
        </div>
    );
};

const RightPanel = () => (
    <div className="flex h-full w-[357px] shrink-0 flex-col overflow-hidden bg-white">
        <PanelHead close={false} />
        <PanelTitle>图纸管理</PanelTitle>
        <div className="flex h-[36px] shrink-0 items-center whitespace-nowrap border-b-2 border-[#dcdcdc] bg-[#efefef] text-[15px] text-[#444]">
            <Ic s={18} className="ml-[6px]"><path d="M4 1h9l4 4v14H4z" fill="#fff" stroke="#3f86d6" strokeWidth={1.5} /><rect x="0" y="11" width="9" height="9" fill="#f08a24" /><path d="M4.500 12.500v6M1.500 15.500h6" stroke="#fff" strokeWidth={1.4} /></Ic>
            <span className="ml-[6px]">添加</span>
            <Ic s={18} className="ml-[18px]"><path d="M6 1h7l4 4v14H4V10" stroke="#bbb" strokeWidth={1.4} strokeDasharray="3 1" /><rect x="1" y="13" width="8" height="6" stroke="#bbb" /></Ic>
            <span className="ml-[7px] text-[#b4b4b4]">定位</span>
            <TinyCaret className="ml-[9px]" />
            <Ic s={20} className="ml-[14px]"><path d="M2 18h16V3L8 8 2 12z" stroke="#bbb" strokeWidth={1.3} /><path d="M5 14l10-8" stroke="#bbb" strokeWidth={1.8} /></Ic>
            <span className="ml-[5px] text-[#b4b4b4]">手动分割</span>
            <TinyCaret className="ml-[10px]" />
            <Ic s={18} className="ml-[15px]"><path d="M6 1h8l4 4v12H6z" fill="#fff" stroke="#3f86d6" strokeWidth={1.5} /><path d="M2 5h8l3 3v11H2z" fill="#fff" stroke="#3f86d6" strokeWidth={1.5} /></Ic>
            <span className="ml-[6px]">复制</span>
        </div>
        <div className="flex h-[31px] shrink-0 items-center border-b-2 border-[#dcdcdc] pl-[4px] text-[15px] text-[#8f8f8f]">搜索图纸...</div>
        <div className="ml-[2px] mt-[2px] h-[267px] shrink-0 border-t-2 border-[#dcdcdc]">
            <div className="flex h-[21px] border-b border-[#dedede] text-[15px] text-[#444]">
                <div className="w-[27px] shrink-0 bg-[#efefef]" />
                <div className="flex w-[138px] shrink-0 items-center justify-center bg-[#7ab8f5] font-medium text-white">图纸名称</div>
                <div className="flex w-[63px] shrink-0 items-center justify-center border-r border-[#dedede] bg-[#efefef]">比例</div>
                <div className="flex w-[89px] shrink-0 items-center justify-center border-r border-[#dedede] bg-[#efefef]">楼层</div>
                <div className="w-[40px] shrink-0 overflow-hidden whitespace-nowrap bg-[#efefef] pl-[2px] leading-[21px]">楼层编号</div>
            </div>
            {drawings.map((r) => <DrawingRow key={r.n} r={r} />)}
            <div className="h-[17px] w-[27px] bg-[#efefef]" />
            <div className="ml-[12px] mt-[6px] h-[10px] w-[258px] rounded-full bg-[#c9c9c9]" />
        </div>
        <div className="h-[7px] shrink-0 border-t-2 border-[#dcdcdc]" />
        <PanelHead close={false} />
        <PanelTitle><span className="font-bold text-[#777]">CAD图层</span></PanelTitle>
        <div className="flex h-[45px] shrink-0 items-center whitespace-nowrap border-b-2 border-[#dcdcdc] bg-[#efefef] pl-[6px] text-[15px] text-[#444]">
            <span>显示指定图层</span>
            <span className="ml-[18px]">隐藏指定图层</span>
            <span className="ml-[18px]">显示指定图元</span>
        </div>
        <div className="w-[278px] text-[15px] text-[#555]">
            <div className="flex h-[22px] border-b-2 border-[#dcdcdc] bg-[#efefef]">
                <div className="flex w-[45px] items-center justify-center border-r border-[#dcdcdc]">开/关</div>
                <div className="flex w-[45px] items-center justify-center border-r border-[#dcdcdc]">颜色</div>
                <div className="flex flex-1 items-center justify-center">名称</div>
            </div>
            {['已提取的CAD图层', 'CAD原始图层'].map((t) => (
                <div key={t} className="flex h-[32px] border-b-2 border-r-2 border-[#dedede]">
                    <div className="flex w-[45px] items-center justify-center border-r border-[#dcdcdc] pt-[7px]">
                        <span className="flex h-[17px] w-[17px] items-center justify-center rounded-[3px] border border-[#8f8f8f] bg-white">
                            <span className="h-[11px] w-[11px] rounded-[2px] border-2 border-[#8fc2f5]" />
                        </span>
                    </div>
                    <div className="flex w-[45px] items-start justify-center border-r border-[#dcdcdc] pt-[6px]">
                        <svg width={10} height={12} viewBox="0 0 10 12" fill="none"><path d="M1.500 1.500l7 4.500-7 4.500z" stroke="#aaa" strokeWidth={1.8} /></svg>
                    </div>
                    <div className="flex-1 pl-[5px] pt-[3px] text-[#444]">{t}</div>
                </div>
            ))}
        </div>
    </div>
);

const ribbon = [
    { t: '选择', arrow: true, w: 'w-[178px] -ml-[14px]' },
    { t: '构件', w: 'w-[235px]' },
    { t: '绘图', arrow: true, w: 'w-[71px]' },
    { t: '识别', arrow: true, w: 'w-[196px]' },
    { t: '检查/显示', w: 'w-[390px]' },
    { t: '通用编辑', arrow: true, w: 'w-[230px]' },
    { t: '二次编辑', w: 'w-[240px]' },
    { t: 'CAD编辑', arrow: true, w: 'w-[342px]' },
];

const Annotations = () => (
    <>
        <div className="absolute left-[9px] top-[221px] h-[285px] w-[241px] border-[3px] border-[#fb3a3a]" />
        <div className="absolute left-[7px] top-[584px] h-[237px] w-[196px] border-[3px] border-[#fb3a3a]" />
        <div className="absolute left-[830px] top-[323px] h-[254px] w-[395px] border-[3px] border-[#fb3a3a]" />
        <svg width={1874} height={829} className="pointer-events-none absolute left-0 top-0">
            <polygon fill="#fb3a3a" points="269,357 286,340 288,348 514,280 292,354 293,361" />
            <polygon fill="#fb3a3a" points="201,685 218,668 219,675 398,623 222,682 223,688" />
        </svg>
    </>
);

export default function App() {
    return (
        <div className="relative h-[829px] w-[1874px] overflow-hidden bg-white font-['Noto_Sans_CJK_SC',sans-serif]">
            <div className="h-full w-full blur-[0.4px]">
                <div className="relative flex h-[41px] border-b-2 border-[#a7aaad] bg-gradient-to-b from-[#f6f7f8] to-[#e9ebec] text-[15px] text-[#333]">
                    <span className="absolute left-0 top-0 h-[7px] w-[50px] bg-[#d5e3f5]" />
                    <span className="absolute left-[190px] top-0 h-[2px] w-[2px] bg-[#6aa5e8]" />
                    <span className="absolute left-[1083px] top-0 h-[2px] w-[3px] bg-[#6aa5e8]" />
                    <span className="absolute left-[1790px] top-0 h-[2px] w-[3px] bg-[#6aa5e8]" />
                    {ribbon.map((r) => (
                        <div key={r.t} className={`flex h-[36px] shrink-0 justify-center border-r border-[#d4d6d8] ${r.w} ${r.arrow ? 'pt-[12px]' : 'pt-[10px]'}`}>
                            <span className="leading-[22px]">{r.t}</span>
                            {r.arrow && <span className="mt-[9px] self-start"><Caret /></span>}
                        </div>
                    ))}
                </div>
                <div className="flex h-[36px] items-center gap-[8px] border-b border-[#8f9296] bg-[#c9ccd0] text-[15px] text-[#333]">
                    <div className="-ml-[3px] flex h-[27px] w-[116px] items-center justify-between rounded-sm bg-white pr-[5px]"><span>第-1层</span><TinyCaret className="" /></div>
                    {['采暖燃气', '设备(暖)', '', '分层1'].map((t) => (
                        <div key={t} className="flex h-[27px] w-[123.5px] items-center justify-between rounded-sm bg-white pl-[4px] pr-[5px]"><span>{t}</span><TinyCaret className="" /></div>
                    ))}
                </div>
                <div className="flex h-[752px]">
                    <LeftPanel />
                    <MiddlePanel />
                    <div className="flex h-full w-[7px] shrink-0 flex-col bg-[#f0f0f0] pl-px pt-[320px]"><Handle /></div>
                    <div className="relative h-full w-[908px] shrink-0 bg-black">
                        <CadDrawing />
                        <SideTools />
                    </div>
                    <div className="h-full w-[11px] shrink-0 bg-white pl-[4px] pr-[2px] pt-[320px]">
                        <Handle />
                    </div>
                    <RightPanel />
                </div>
            </div>
            <Annotations />
        </div>
    );
}
